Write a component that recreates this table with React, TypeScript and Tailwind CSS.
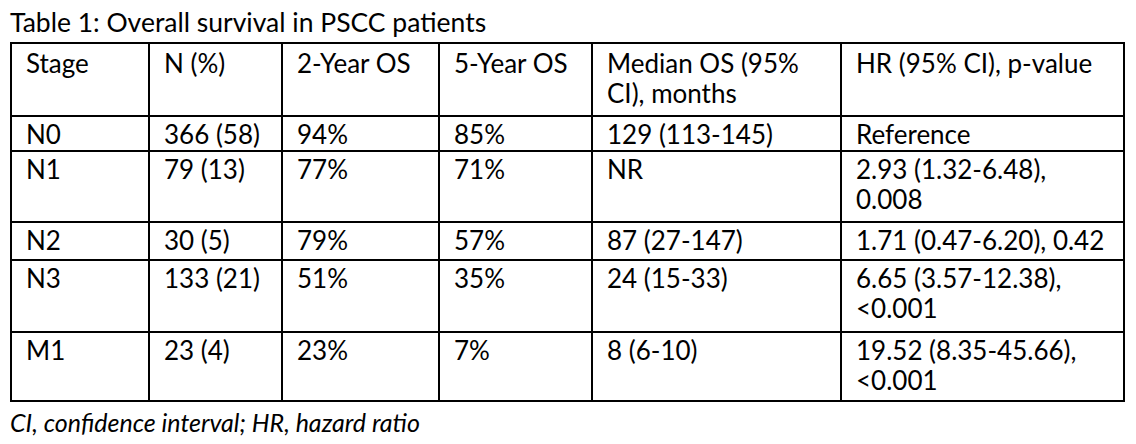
import type React from "react"

const rows: React.ReactNode[][] = [
  ["N0", "366 (58)", "94%", "85%", "129 (113-145)", "Reference"],
  ["N1", "79 (13)", "77%", "71%", "NR", <>2.93 (1.32-6.48),<br />0.008</>],
  ["N2", "30 (5)", "79%", "57%", "87 (27-147)", "1.71 (0.47-6.20), 0.42"],
  ["N3", "133 (21)", "51%", "35%", "24 (15-33)", <>6.65 (3.57-12.38),<br />&lt;0.001</>],
  ["M1", "23 (4)", "23%", "7%", "8 (6-10)", <>19.52 (8.35-45.66),<br />&lt;0.001</>],
]

const heights = ["h-[35px]", "h-[71px]", "h-[38px]", "h-[72px]", "h-[69px]"]

const headers: React.ReactNode[] = [
  "Stage",
  "N (%)",
  "2-Year OS",
  "5-Year OS",
  <>Median OS (95%<br />CI), months</>,
  "HR (95% CI), p-value",
]

export default function App() {
  return (
    <div className="w-[1136px] h-[444px] bg-white text-black font-['Lato',sans-serif] text-[26px] leading-[30px] overflow-hidden">
      <div className="pl-[10px] pt-[7px] h-[42px] text-[26.5px] whitespace-nowrap">Table 1: Overall survival in PSCC patients</div>
      <table className="ml-[10px] border-collapse border-2 border-black table-fixed w-[1115px]">
        <colgroup>
          <col className="w-[138px]" />
          <col className="w-[133px]" />
          <col className="w-[157px]" />
          <col className="w-[153px]" />
          <col className="w-[249px]" />
          <col className="w-[283px]" />
        </colgroup>
        <thead>
          <tr className="h-[73px]">
            {headers.map((h, i) => (
              <th key={i} className="border-2 border-black font-normal text-left align-top pl-[14px] pr-0 pt-[4px] whitespace-nowrap">
                {h}
              </th>
            ))}
          </tr>
        </thead>
        <tbody>
          {rows.map((r, i) => (
            <tr key={i} className={heights[i]}>
              {r.map((c, j) => (
                <td key={j} className="border-2 border-black align-top pl-[14px] pr-0 pt-[2px] whitespace-nowrap">
                  {c}
                </td>
              ))}
            </tr>
          ))}
        </tbody>
      </table>
      <div className="pl-[10px] pt-[5px] italic text-[25px] whitespace-nowrap">CI, confidence interval; HR, hazard ratio</div>
    </div>
  )
}
